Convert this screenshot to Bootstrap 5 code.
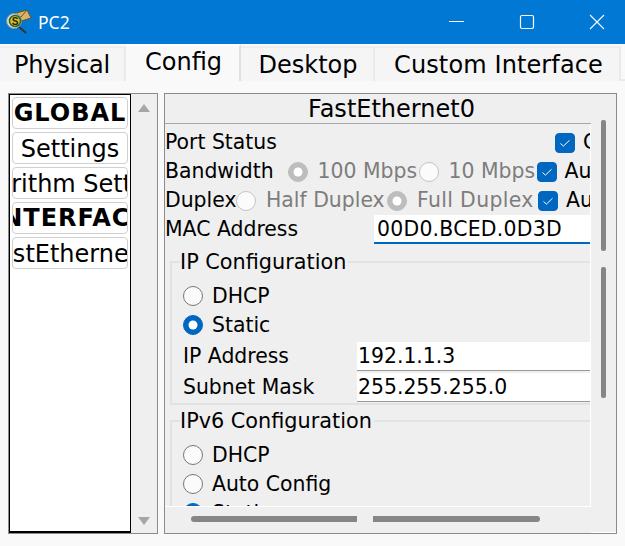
<!DOCTYPE html>
<html lang="en">
<head>
  <meta charset="UTF-8">
  <meta name="viewport" content="width=device-width, initial-scale=1.0">
  <title>PC2</title>
  <link href="https://cdn.jsdelivr.net/npm/bootstrap@5.3.3/dist/css/bootstrap.min.css" rel="stylesheet">
  <style>
    html, body { height: 100%; }
    body {
      width: 625px; height: 546px; overflow: hidden; margin: 0;
      background: #f9f9f9; color: #000;
      font-family: "DejaVu Sans", sans-serif; font-size: 20.4px;
    }
    .title-bar {
      height: 44px; background: #0078d4; color: #fff;
      font-family: "Noto Sans", sans-serif; font-size: 17.5px;
      padding-left: 6px;
    }
    .title-name { margin-left: 6px; }
    .win-btns { padding-right: 20px; gap: 54px; }

    .tab-strip { height: 37px; border-bottom: 2px solid #eaeaea; padding: 0; flex-wrap: nowrap; }
    .tab-strip .nav-link {
      height: 35px; margin-top: 2px; padding: 0; color: #000; font-size: 24px; line-height: 34px;
      background: #f5f5f5; text-align: center; border: 0; border-right: 2px solid #eaeaea; border-radius: 0;
      border-top: 2px solid #eee;
    }
    .tab-strip .nav-link.active { height: 37px; margin-top: 0; background: #f9f9f9; color: #000; border-top: 2px solid #fff; line-height: 32px; }
    .tab-strip .tab-physical { width: 126px; letter-spacing: -.2px; }
    .tab-strip .tab-config { width: 115px; padding-left: 2px; }
    .tab-strip .tab-desktop { width: 134px; padding-left: 2px; }
    .tab-strip .tab-custom { width: 246px; padding-left: 3px; letter-spacing: .12px; }

    .work-area { padding: 12px 8px 0 8px; gap: 6px; }
    .side-panel { width: 150px; height: 441px; background: #efefef; border: 1px solid #8a8a90; }
    .side-list { width: 122px; height: 100%; background: #fff; border: 1px solid #000; padding: 2px; gap: 3px; border-bottom-width: 2px; }
    .side-item {
      height: 32px; overflow: hidden; white-space: nowrap; border: 1px solid #d0d0d0; border-radius: 4px;
      font-size: 24px; line-height: 32px; background: #fff; justify-content: center; flex-shrink: 0;
    }
    .side-item.head { font-weight: 700; letter-spacing: 1px; line-height: 30px; }
    .side-scroll { width: 26px; padding: 10px 0 8px; }
    .tri-up { width: 0; height: 0; border-left: 6px solid transparent; border-right: 6px solid transparent; border-bottom: 8px solid #a6a6a6; }
    .tri-down { width: 0; height: 0; border-left: 6px solid transparent; border-right: 6px solid transparent; border-top: 8px solid #a6a6a6; }

    .main-panel { width: 453px; height: 441px; background: #efefef; border: 1px solid #8a8a90; }
    .main-left { width: 426px; }
    .main-title { height: 30px; border-bottom: 1px solid #a8a8a8; text-align: center; font-size: 24px; line-height: 30px; padding-left: 27px; white-space: nowrap; }
    .main-body { height: 383px; overflow: hidden; border-bottom: 1px solid #fff; border-right: 1px solid #fff; padding-top: 4px; }
    .form-line { height: 29px; white-space: nowrap; flex-shrink: 0; line-height: 29px; }
    .form-line > span { flex-shrink: 0; }
    .muted-txt { color: #7d7d7d; margin-left: 10px; }
    .form-check-input { margin: 0; flex-shrink: 0; width: 20px; height: 20px; background-color: #fbfbfb; border: 1px solid #777; }
    .cfg-group .form-check-input { margin-bottom: 2px; }
    .form-check-input:checked { background-color: #0067c0; border-color: #0067c0; }
    .form-check-input:disabled { opacity: 1; border-color: #c4c4c4; }
    .form-check-input[type=radio]:disabled:checked { background-color: #bdbdbd; border-color: #bdbdbd; }
    .form-check-input[type=checkbox] { border-radius: 4px; }
    .form-check-input[type=checkbox]:checked {
      background-image: url("data:image/svg+xml,%3csvg xmlns='http://www.w3.org/2000/svg' viewBox='0 0 20 20'%3e%3cpath fill='none' stroke='%23fff' stroke-width='1.1' d='M5 10.5l3.2 3L15 7'/%3e%3c/svg%3e");
    }
    .port-check { margin-left: 278px; }
    .port-on { margin-left: 8px; }
    .band-radio { margin-left: 14px; }
    .lbl-100 { width: 101px; }
    .lbl-10 { width: 88px; }
    .lbl-half { width: 121px; }
    .lbl-full { width: 121px; letter-spacing: .35px; }
    .auto-lbl { margin-left: 8px; }
    .duplex-lbl { width: 71px; }
    .mac-lbl { width: 209px; }
    .txt-input {
      background: #fff; border: 0; border-radius: 0; padding: 1px 3px 0; height: 29px; font: inherit; color: #000;
      border-bottom: 1px solid #9a9a9a; outline: 0; min-width: 0;
    }
    .mac-input { flex: 1; border-bottom: 2px solid #0067c0; letter-spacing: .25px; }
    .ip-input { width: 233px; padding-left: 1px; }

    .cfg-group { border: 2px solid #e2e2e2; border-right: 0; margin: 0 0 0 5px; padding: 0 0 0 11px; }
    .cfg-group legend {
      float: none; width: auto; font-size: 20.8px; line-height: 24px; margin: 0 0 8px -3px; padding: 0 2px 0 0;
    }
    .group-ip { height: 155px; margin-top: 6px; }
    .group-six { height: 120px; margin-top: 4px; }
    .lbl-gap { margin-left: 9px; }
    .row-gap-ip { margin-top: 2px; }

    .bottom-bar { height: 26px; padding: 9px 0 0 26px; gap: 16px; }
    .h-thumb { width: 166px; height: 6px; background: #868686; border-radius: 3px 0 0 3px; }
    .h-thumb.end { width: 167px; border-radius: 0 3px 3px 0; }
    .main-scroll { width: 26px; padding: 26px 0 0 10px; gap: 16px; border-bottom: 1px solid #fff; }
    .v-thumb { width: 5px; height: 131px; background: #868686; border-radius: 2px; }
  </style>
</head>
<body>
  <div class="title-bar d-flex align-items-center">
    <svg width="26" height="26" viewBox="0 0 26 26">
      <path d="M7 5 L21 1 L25 9 L12 13 Z" fill="#d9b36a" stroke="#6b5320"/>
      <path d="M7 5 L15 8 L21 1" fill="none" stroke="#6b5320"/>
      <path d="M12 17 L20 24" stroke="#333" stroke-width="2"/>
      <circle cx="8" cy="12" r="7.5" fill="#d8d8d8" stroke="#8c8c8c"/>
      <circle cx="9" cy="12" r="5.5" fill="#e4c21c" stroke="#1f6b2f" stroke-width="1.5"/>
      <text x="9" y="16" font-size="10" font-weight="700" text-anchor="middle" font-family="Liberation Sans, sans-serif" fill="#222">S</text>
    </svg>
    <span class="title-name">PC2</span>
    <div class="ms-auto d-flex win-btns">
      <svg width="16" height="16" viewBox="0 0 16 16"><path d="M0 7.5H15" stroke="#fff"/></svg>
      <svg width="16" height="16" viewBox="0 0 16 16"><rect x="1.5" y="1.5" width="13" height="13" rx="1.5" fill="none" stroke="#fff" stroke-width="1.2"/></svg>
      <svg width="16" height="16" viewBox="0 0 16 16"><path d="M1 1L15 15M15 1L1 15" stroke="#fff" stroke-width="1.1"/></svg>
    </div>
  </div>

  <ul class="nav nav-tabs tab-strip">
    <li class="nav-item"><a class="nav-link tab-physical" href="#">Physical</a></li>
    <li class="nav-item"><a class="nav-link active tab-config" href="#">Config</a></li>
    <li class="nav-item"><a class="nav-link tab-desktop" href="#">Desktop</a></li>
    <li class="nav-item"><a class="nav-link tab-custom" href="#">Custom Interface</a></li>
  </ul>

  <div class="work-area d-flex">
    <div class="side-panel d-flex">
      <div class="side-list d-flex flex-column">
        <div class="side-item head d-flex">GLOBAL</div>
        <div class="side-item d-flex">Settings</div>
        <div class="side-item d-flex">Algorithm Settings</div>
        <div class="side-item head d-flex">INTERFACE</div>
        <div class="side-item d-flex">FastEthernet0</div>
      </div>
      <div class="side-scroll d-flex flex-column align-items-center justify-content-between">
        <div class="tri-up"></div>
        <div class="tri-down"></div>
      </div>
    </div>

    <div class="main-panel d-flex">
      <div class="main-left">
        <div class="main-title">FastEthernet0</div>
        <div class="main-body">
          <div class="form-line d-flex align-items-center">
            <span>Port Status</span>
            <input class="form-check-input port-check" type="checkbox" checked>
            <span class="port-on">On</span>
          </div>
          <div class="form-line d-flex align-items-center">
            <span>Bandwidth</span>
            <input class="form-check-input band-radio" type="radio" disabled checked>
            <span class="muted-txt lbl-100">100 Mbps</span>
            <input class="form-check-input" type="radio" disabled>
            <span class="muted-txt lbl-10">10 Mbps</span>
            <input class="form-check-input" type="checkbox" checked>
            <span class="auto-lbl">Auto</span>
          </div>
          <div class="form-line d-flex align-items-center">
            <span class="duplex-lbl">Duplex</span>
            <input class="form-check-input" type="radio" disabled>
            <span class="muted-txt lbl-half">Half Duplex</span>
            <input class="form-check-input" type="radio" disabled checked>
            <span class="muted-txt lbl-full">Full Duplex</span>
            <input class="form-check-input" type="checkbox" checked>
            <span class="auto-lbl">Auto</span>
          </div>
          <div class="form-line d-flex align-items-center">
            <span class="mac-lbl">MAC Address</span>
            <input class="txt-input mac-input" type="text" value="00D0.BCED.0D3D">
          </div>

          <fieldset class="cfg-group group-ip">
            <legend>IP Configuration</legend>
            <div class="form-line d-flex align-items-center"><input class="form-check-input" type="radio"><span class="lbl-gap">DHCP</span></div>
            <div class="form-line d-flex align-items-center"><input class="form-check-input" type="radio" checked><span class="lbl-gap">Static</span></div>
            <div class="form-line d-flex align-items-center row-gap-ip"><span>IP Address</span><input class="txt-input ip-input ms-auto" type="text" value="192.1.1.3"></div>
            <div class="form-line d-flex align-items-center row-gap-ip"><span>Subnet Mask</span><input class="txt-input ip-input ms-auto" type="text" value="255.255.255.0"></div>
          </fieldset>

          <fieldset class="cfg-group group-six">
            <legend>IPv6 Configuration</legend>
            <div class="form-line d-flex align-items-center"><input class="form-check-input" type="radio"><span class="lbl-gap">DHCP</span></div>
            <div class="form-line d-flex align-items-center"><input class="form-check-input" type="radio"><span class="lbl-gap">Auto Config</span></div>
            <div class="form-line d-flex align-items-center"><input class="form-check-input" type="radio" checked><span class="lbl-gap">Static</span></div>
          </fieldset>
        </div>
        <div class="bottom-bar d-flex">
          <div class="h-thumb"></div>
          <div class="h-thumb end"></div>
        </div>
      </div>
      <div class="main-scroll d-flex flex-column">
        <div class="v-thumb"></div>
        <div class="v-thumb"></div>
      </div>
    </div>
  </div>

  <script src="https://cdn.jsdelivr.net/npm/bootstrap@5.3.3/dist/js/bootstrap.bundle.min.js"></script>
</body>
</html>
